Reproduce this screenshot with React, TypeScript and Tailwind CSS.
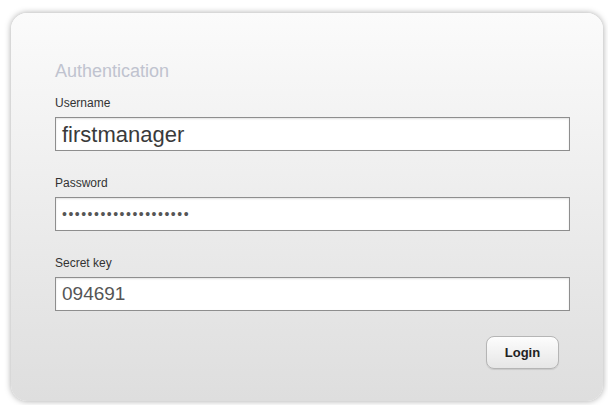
export default function App() {
  const font = { fontFamily: '"Liberation Sans", Arial, sans-serif' };
  return (
    <div className="w-[608px] h-[405px] bg-white pt-[13px] pl-[11px]" style={font}>
      <div className="w-[592px] h-[388px] rounded-[16px] bg-gradient-to-b from-[#fbfbfb] to-[#dedede] shadow-[0_0_6px_rgba(0,0,0,0.35)] pt-[47px] px-[44px]">
        <h1 className="text-[18px] leading-[22px] text-[#c0c3cf]">Authentication</h1>
        <Field label="Username" mt="mt-[14px]">
          <span className="text-[22px] text-[#3a3a3a]">firstmanager</span>
        </Field>
        <Field label="Password" mt="mt-[25px]">
          <span className="text-[14px] tracking-[1.5px] text-[#555]">••••••••••••••••••••</span>
        </Field>
        <Field label="Secret key" mt="mt-[25px]">
          <span className="text-[19px] text-[#555]">094691</span>
        </Field>
        <div className="flex justify-end mt-[25px]">
          <button className="w-[73px] h-[33px] rounded-[8px] border border-[#b5b5b5] bg-gradient-to-b from-[#fdfdfd] to-[#e6e6e6] shadow-[0_1px_1px_rgba(0,0,0,0.1)] text-[13px] font-bold text-[#222]">
            Login
          </button>
        </div>
      </div>
    </div>
  );
}

function Field({ label, mt, children }: { label: string; mt: string; children: React.ReactNode }) {
  return (
    <div className={mt}>
      <div className="text-[12px] leading-[14px] text-[#333]">{label}</div>
      <div className="mt-[7px] h-[34px] w-[515px] bg-white border border-[#8e8e8e] shadow-[inset_0_1px_2px_rgba(0,0,0,0.12)] flex items-center px-[6px]">
        {children}
      </div>
    </div>
  );
}
